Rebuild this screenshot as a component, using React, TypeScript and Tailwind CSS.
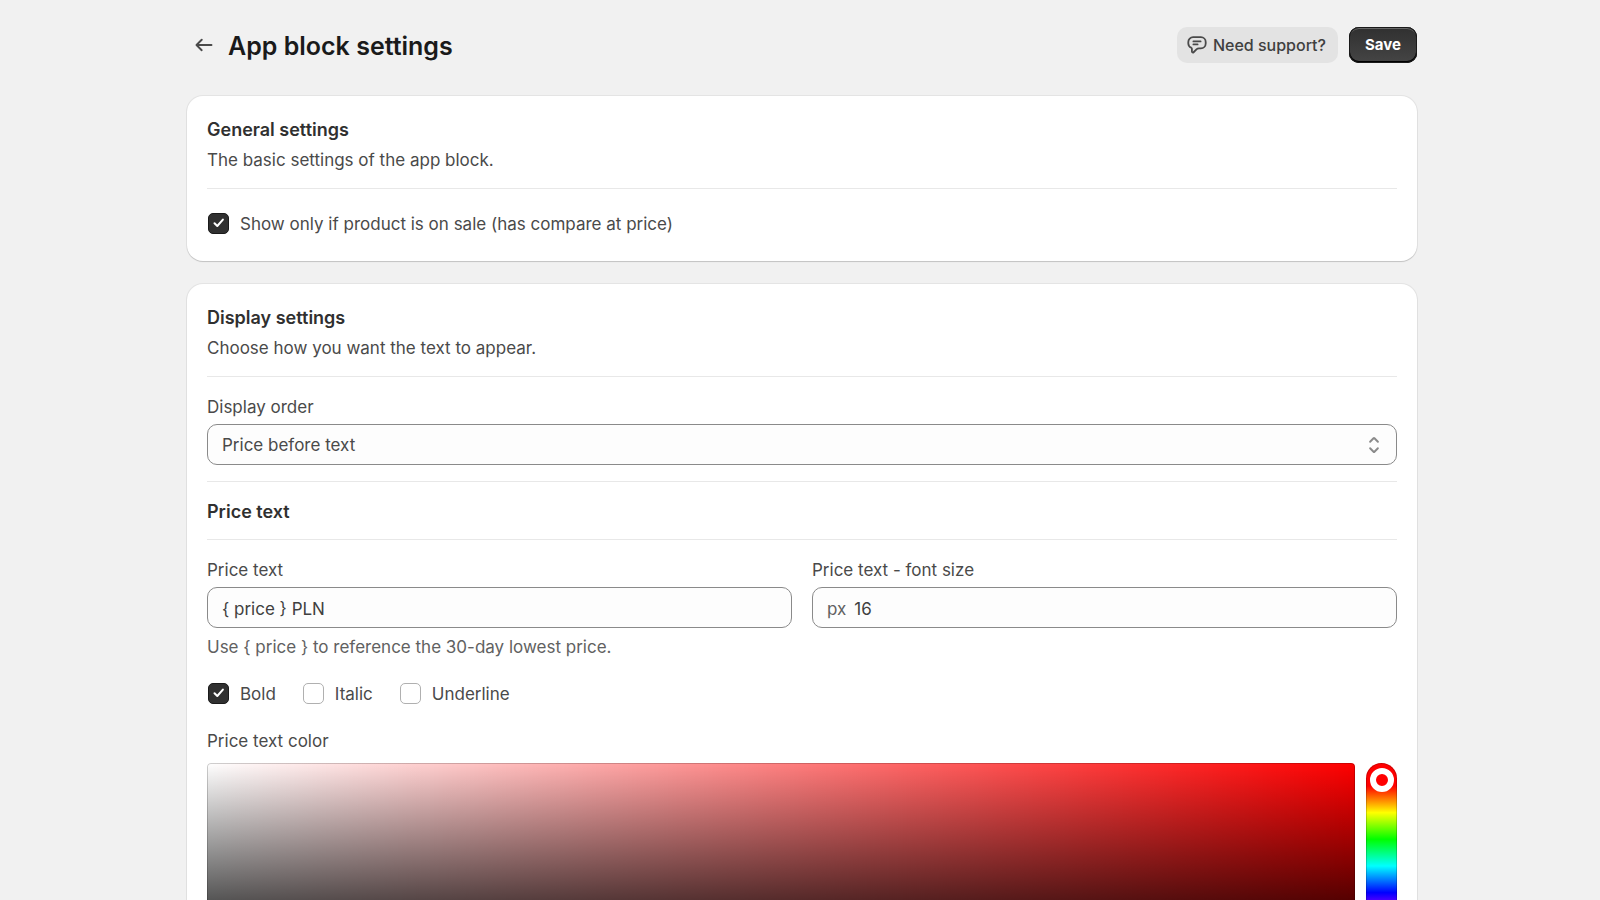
import { useState } from "react";
import type { ReactNode } from "react";

function ArrowLeftIcon() {
  return (
    <svg viewBox="0 0 20 20" className="w-[26px] h-[26px] fill-[#4a4a4a]" aria-hidden="true">
      <path d="M16.5 10a.75.75 0 0 1-.75.75h-9.69l2.72 2.72a.75.75 0 0 1-1.06 1.06l-4-4a.75.75 0 0 1 0-1.06l4-4a.75.75 0 1 1 1.06 1.06l-2.72 2.72h9.69a.75.75 0 0 1 .75.75Z" />
    </svg>
  );
}

function ChatIcon() {
  return (
    <svg viewBox="0 0 20 20" className="w-6 h-6 fill-none stroke-[#4a4a4a] stroke-[1.5]" strokeLinecap="round" strokeLinejoin="round" aria-hidden="true">
      <path d="M6.75 3.5h6.5a4 4 0 0 1 4 4v1.25a4 4 0 0 1-4 4h-1.7c-.7 0-1.3.25-1.8.7l-2.6 2.6c-.5.5-1.4.2-1.4-.6v-2.3c0-.4-.2-.7-.6-.9a4 4 0 0 1-2.4-3.5v-1.25a4 4 0 0 1 4-4Z" />
      <path d="M7 7h6M7 9.5h3.5" />
    </svg>
  );
}

function SelectIcon() {
  return (
    <svg viewBox="0 0 20 20" className="w-[26px] h-[26px] fill-[#8a8a8a]" aria-hidden="true">
      <path d="M10.884 4.323a1.25 1.25 0 0 0-1.768 0l-2.646 2.647a.75.75 0 0 0 1.06 1.06l2.47-2.47 2.47 2.47a.75.75 0 1 0 1.06-1.06l-2.646-2.647Z" />
      <path d="m13.53 13.03-2.646 2.647a1.25 1.25 0 0 1-1.768 0l-2.646-2.647a.75.75 0 0 1 1.06-1.06l2.47 2.47 2.47-2.47a.75.75 0 0 1 1.06 1.06Z" />
    </svg>
  );
}

function Checkbox({ label, defaultChecked = false }: { label: string; defaultChecked?: boolean }) {
  const [checked, setChecked] = useState(defaultChecked);
  return (
    <label className="inline-flex items-center gap-[11px] h-9 pl-px cursor-pointer">
      <span className="grid place-items-center">
        <input
          type="checkbox"
          checked={checked}
          onChange={(e) => setChecked(e.target.checked)}
          className="col-start-1 row-start-1 appearance-none w-[21px] h-[21px] rounded-[5px] border border-[#b0b0b0] bg-white checked:border-[#1a1a1a] checked:bg-[#303030]"
        />
        {checked && (
          <svg viewBox="0 0 16 16" className="col-start-1 row-start-1 w-4 h-4 fill-none stroke-white stroke-2 pointer-events-none" strokeLinecap="round" strokeLinejoin="round" aria-hidden="true">
            <path d="M3.5 8.2l2.8 2.8 5.6-6.4" />
          </svg>
        )}
      </span>
      <span className="pt-0.5">{label}</span>
    </label>
  );
}

function Card({ title, description, children }: { title: string; description: string; children: ReactNode }) {
  return (
    <section className="bg-white rounded-2xl p-5 shadow-[0_1px_1px_0_rgba(26,26,26,0.16),0_0_0_1px_rgba(26,26,26,0.06)]">
      <div className="flex flex-col gap-[3px]">
        <SectionTitle>{title}</SectionTitle>
        <p>{description}</p>
      </div>
      {children}
    </section>
  );
}

function SectionTitle({ children }: { children: ReactNode }) {
  return <h2 className="text-[18px] font-semibold leading-[27px] text-[#303030]">{children}</h2>;
}

function Divider() {
  return <hr className="border-0 h-px mt-[14px] mb-4 bg-[#e8e8e8]" />;
}

function TextField({ id, label, prefix, defaultValue, helpText }: { id: string; label: string; prefix?: string; defaultValue: string; helpText?: string }) {
  return (
    <div className="flex flex-col">
      <label htmlFor={id}>{label}</label>
      <div className="flex items-center gap-2 h-[41px] mt-[3px] px-[14px] pt-0.5 rounded-[10px] border border-[#8a8a8a] bg-[#fdfdfd]">
        {prefix && <span className="text-[#616161]">{prefix}</span>}
        <input id={id} type="text" defaultValue={defaultValue} className="flex-1 min-w-0 bg-transparent outline-none text-[#404040]" />
      </div>
      {helpText && <p className="mt-[5px] text-[#616161]">{helpText}</p>}
    </div>
  );
}

function ColorPicker() {
  return (
    <div className="flex gap-[11px] h-[206px]">
      <div className="flex-1 rounded bg-[#ff0000] bg-[linear-gradient(to_top,#000,transparent),linear-gradient(to_right,#fff,transparent)] shadow-[inset_0_0_0_1px_rgba(0,0,0,0.19)]" />
      <div className="w-[31px] rounded-full pt-[5px] flex justify-center items-start bg-[linear-gradient(to_bottom,#f00_23px,#ff0,#0f0,#0ff,#00f,#f0f,#f00_183px)] shadow-[inset_0_0_0_1px_rgba(0,0,0,0.19)]">
        <div className="w-6 h-6 rounded-full border-[6px] border-white bg-[#ff0000]" />
      </div>
    </div>
  );
}

export default function App() {
  return (
    <div className="min-h-screen bg-[#f1f1f1] pl-1 font-[Inter,sans-serif] text-[17px] leading-7 text-[#4a4a4a]">
      <main className="max-w-[1230px] mx-auto pb-10">
        {/* Header */}
        <header className="flex items-center justify-between pt-[27px] pb-[33px]">
          <div className="flex items-center gap-[11px] pl-1">
            <button type="button" aria-label="Back">
              <ArrowLeftIcon />
            </button>
            <h1 className="pt-0.5 text-[25px] leading-8 font-semibold text-[#1a1a1a]">App block settings</h1>
          </div>
          <div className="flex items-center gap-[11px]">
            <button type="button" className="flex items-center gap-1 h-9 pl-2 pr-3 rounded-[10px] bg-[#e3e3e3] text-[16px] font-medium text-[#404040]">
              <ChatIcon />
              Need support?
            </button>
            <button type="button" className="h-9 w-[68px] rounded-[10px] bg-linear-to-b from-[#303030] to-[#454545] text-[15px] font-bold text-white shadow-[inset_0_0_0_1px_#1a1a1a,inset_0_-1px_0_1px_#000,inset_0_2px_0_0_#666]">
              Save
            </button>
          </div>
        </header>

        <div className="flex flex-col gap-[23px]">
          <Card title="General settings" description="The basic settings of the app block.">
            <Divider />
            <div className="flex">
              <Checkbox label="Show only if product is on sale (has compare at price)" defaultChecked />
            </div>
          </Card>

          <Card title="Display settings" description="Choose how you want the text to appear.">
            <Divider />
            <div className="flex flex-col gap-[3px] pb-0.5">
              <label htmlFor="display-order">Display order</label>
              <div className="grid items-center">
                <select id="display-order" className="col-start-1 row-start-1 appearance-none h-[41px] px-[14px] rounded-[10px] border border-[#8a8a8a] bg-[#fdfdfd]">
                  <option>Price before text</option>
                  <option>Text before price</option>
                </select>
                <span className="col-start-1 row-start-1 flex justify-self-end pr-[10px] pointer-events-none">
                  <SelectIcon />
                </span>
              </div>
            </div>
            <Divider />
            <SectionTitle>Price text</SectionTitle>
            <Divider />
            <div className="grid grid-cols-2 gap-5">
              <TextField id="price-text" label="Price text" defaultValue="{ price } PLN" helpText="Use { price } to reference the 30-day lowest price." />
              <TextField id="price-font-size" label="Price text - font size" prefix="px" defaultValue="16" />
            </div>
            <div className="flex gap-[26px] mt-[14px] mb-4">
              <Checkbox label="Bold" defaultChecked />
              <Checkbox label="Italic" />
              <Checkbox label="Underline" />
            </div>
            <div className="flex flex-col gap-2">
              <p>Price text color</p>
              <ColorPicker />
            </div>
          </Card>
        </div>
      </main>
    </div>
  );
}
